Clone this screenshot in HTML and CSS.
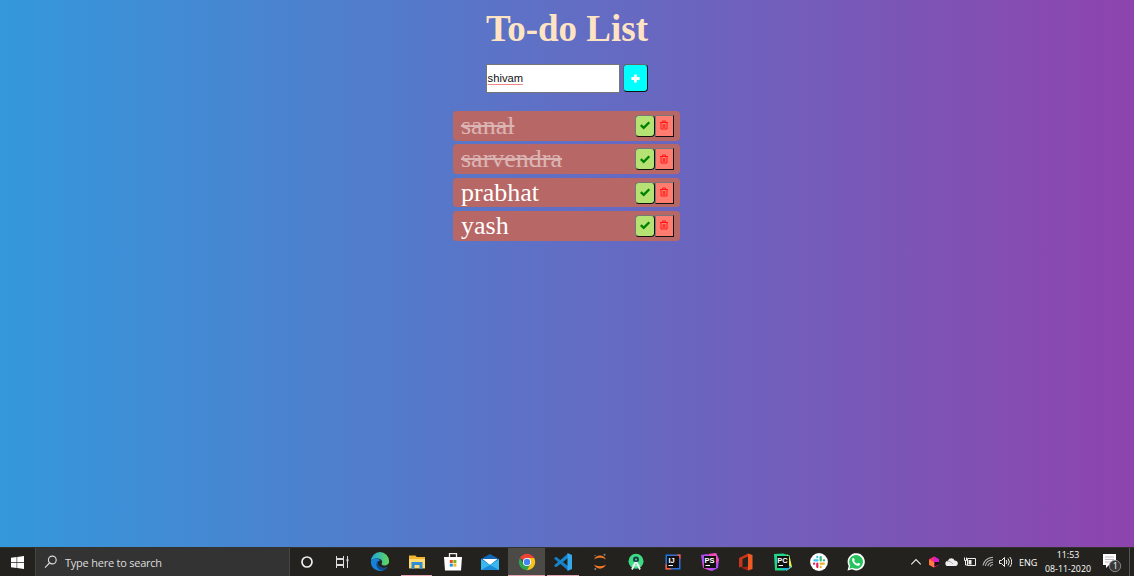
FILE: index.html
```html
<!DOCTYPE html>
<html lang="en">
<head>
<meta charset="utf-8">
<title>To-do List</title>
<link rel="stylesheet" href="styles.css">
</head>
<body>
<svg class="defs" width="0" height="0">
  <defs>
    <symbol id="check" viewBox="0 0 12 12"><path d="M1.8 6.2 4.7 8.9 10.3 3.3" fill="none" stroke="#008000" stroke-width="2.3"/></symbol>
    <symbol id="trash" viewBox="0 0 12 12"><path d="M2 3.500h8M4.500 3.200V2h3v1.200M3 3.800v6.200h6V3.800M5.200 5v4M6.800 5v4" fill="none" stroke="#ff1818" stroke-width="1"/></symbol>
  </defs>
</svg>
<main class="page">
  <h1 class="title">To-do List</h1>
  <form class="entry">
    <div class="field"><span class="typed">shivam</span></div>
    <button class="add" type="button" aria-label="Add"><svg width="9" height="9" viewBox="0 0 9 9"><path d="M4.5.4v8.2M.4 4.5h8.2" stroke="#fff" stroke-width="2.8"/></svg></button>
  </form>
  <ul class="list">
    <li class="item"><span class="name done">sanal</span><button class="btn ok"><svg><use href="#check"/></svg></button><button class="btn del"><svg><use href="#trash"/></svg></button></li>
    <li class="item"><span class="name done">sarvendra</span><button class="btn ok"><svg><use href="#check"/></svg></button><button class="btn del"><svg><use href="#trash"/></svg></button></li>
    <li class="item"><span class="name">prabhat</span><button class="btn ok"><svg><use href="#check"/></svg></button><button class="btn del"><svg><use href="#trash"/></svg></button></li>
    <li class="item"><span class="name">yash</span><button class="btn ok"><svg><use href="#check"/></svg></button><button class="btn del"><svg><use href="#trash"/></svg></button></li>
  </ul>
</main>
<footer class="taskbar">
  <div class="start"><svg width="13" height="13" viewBox="0 0 13 13"><path fill="#fff" d="M0 1.8 5.6 1v5.1H0zM6.2.9 13 0v6.1H6.2zM0 6.8h5.6V12L0 11.2zM6.2 6.8H13V13l-6.8-.9z"/></svg></div>
  <div class="search">
    <svg width="14" height="14" viewBox="0 0 14 14"><g fill="none" stroke="#ddd" stroke-width="1.1"><circle cx="8.3" cy="5" r="3.9"/><path d="M5.5 8 1 12.6"/></g></svg>
    <span>Type here to search</span>
  </div>
  <div class="apps">
    <div class="app"><svg viewBox="0 0 20 20"><circle cx="10" cy="10" r="5" fill="none" stroke="#eee" stroke-width="1.7"/></svg></div>
    <div class="app task"><svg viewBox="0 0 20 20"><g fill="none" stroke="#ddd" stroke-width="1"><path d="M4.500 4v2.500h7V4M4.500 16v-2.500h7V16M4.500 7.500h7v5h-7zM4.500 6v8M11.500 6v8M15.500 4v12"/><path d="M14.500 8.200h2" stroke-width="2"/></g></svg></div>
    <div class="app"><svg viewBox="0 0 20 20">
      <defs><linearGradient id="edge" x1="0" x2="1"><stop offset="0" stop-color="#1ca5e6"/><stop offset="1" stop-color="#62d957"/></linearGradient></defs>
      <path d="M1 9A9 9 0 0 1 19 9c.4 3-2.2 4.700-5 4.500-2-.1-2.700-1-2.400-1.700C13.600 8.200 10 6 6.300 6.500 3.800 6.800 2 7.700 1 9z" fill="url(#edge)"/>
      <path d="M1 9c1-3 7.500-3.600 9.600-.5C8 8 7 11 8 13c1.600 3.200 6 3.800 9.300 2A9 9 0 0 1 1 9z" fill="#1583d8"/>
      <path d="M7.500 9c-3 4 .2 9.200 5 9.600 2-.4 4-2 5-3.600-3.400 1.600-7.600 1-9.200-2C7.600 11.500 7.600 10 8.500 9z" fill="#104a91"/></svg></div>
    <div class="app open"><svg viewBox="0 0 20 20"><path d="M2 3.500h6.500l1.300 1.500H18v11.500H2z" fill="#f3b72f"/><path d="M2 7h16v9H2z" fill="#ffdb72"/><path d="M4.500 10h11v7h-3v-4h-5v4h-3z" fill="#2e8ed5"/></svg></div>
    <div class="app"><svg viewBox="0 0 20 20"><path d="M6.500 5V1.600h7V5" fill="none" stroke="#eee" stroke-width="1.300"/><path d="M1 5h18l-1 13.500H2z" fill="#fff"/><path fill="#f04b23" d="M6.800 8h3v3h-3z"/><path fill="#75b817" d="M10.400 8h3v3h-3z"/><path fill="#159be5" d="M6.800 11.600h3v3h-3z"/><path fill="#f7b719" d="M10.400 11.600h3v3h-3z"/></svg></div>
    <div class="app"><svg viewBox="0 0 20 20"><path d="M1 7 10 2l9 5v11H1z" fill="#1267b4"/><path d="M2.500 7h15L10 13z" fill="#fff"/><path d="m1 7 9 6 9-6v11H1z" fill="#37b8ee"/><path d="m1 18 9-5 9 5z" fill="#198ad7"/></svg></div>
    <div class="app open active"><svg viewBox="0 0 20 20"><path d="M10 10 2.900 5.900A8.200 8.200 0 0 1 17.100 5.900z" fill="#e94435"/><path d="M10 10V5.900h7.100A8.200 8.200 0 0 1 10 18.200z" fill="#fbc116"/><path d="M10 10v8.200A8.200 8.200 0 0 1 2.900 5.900l3.600 6.100 7 0-3.500 6.200z" fill="#31a350"/><circle cx="10" cy="10" r="4.100" fill="#fff"/><circle cx="10" cy="10" r="3.200" fill="#4285f4"/></svg></div>
    <div class="app open"><svg viewBox="0 0 20 20"><path d="m1 6.500 2-1.700L15 14v4.500z" fill="#167fc7"/><path d="m1 13.500 2 1.700L15 6V1.500z" fill="#1686cd"/><path d="m14.500 1 4.500 2v14l-4.500 2z" fill="#32a9ed"/></svg></div>
    <div class="app"><svg viewBox="0 0 20 20"><path d="M4 7.500c2-5.500 10-5.500 12 0-3-2.300-9-2.300-12 0zM4 12.500c2 5.500 10 5.500 12 0-3 2.300-9 2.300-12 0z" fill="#f37726"/><g fill="#888"><circle cx="14.500" cy="2.800" r="1"/><circle cx="5" cy="3.600" r=".7"/><circle cx="5.300" cy="17" r="1"/></g></svg></div>
    <div class="app"><svg viewBox="0 0 20 20"><circle cx="10" cy="9.300" r="7.500" fill="#3ddc84"/><circle cx="10" cy="7.500" r="3" fill="#173e48"/><path d="m9.500 10-3.500 7.500M10.500 10l3.500 7.500" stroke="#e9f5f2" stroke-width="1.800"/><path d="M6.500 13q3.500 2 7 0" stroke="#e9f5f2" fill="none"/><circle cx="10" cy="7.500" r="1" fill="#3ddc84"/></svg></div>
    <div class="app"><svg viewBox="0 0 20 20"><defs><linearGradient id="idea" x2="1" y2="1"><stop stop-color="#087cfa"/><stop offset=".55" stop-color="#6c62a8"/><stop offset="1" stop-color="#087cfa"/></linearGradient></defs><path d="M2.500 2.500h15v15h-15z" fill="url(#idea)"/><path d="m2.500 12 6 5.500h-6zM14 2.500h3.500V7z" fill="#fe5c35"/><path d="M4 4h12v12H4z" fill="#111"/><text x="5.500" y="10.800" class="badge">IJ</text><path d="M5.500 13.500h4.500" stroke="#fff"/></svg></div>
    <div class="app"><svg viewBox="0 0 20 20"><path d="m1 3 6-1 2 1 7-2 3 6-1 9-6 3-9-3z" fill="#b04cf3"/><path d="m8 2 8-1 3 8-3 2zM2 10l2 6 7 3z" fill="#f24bba"/><path d="M4 4h12v12H4z" fill="#111"/><text x="4.500" y="10.800" class="badge">PS</text><path d="M5.500 13.500h4.500" stroke="#fff"/></svg></div>
    <div class="app"><svg viewBox="0 0 20 20"><path d="m3 6 9-4.500v3L6.500 7v7.500L3 15.500z" fill="#c83518"/><path d="m12 1.500 4.500 1.500v14L12 18.500z" fill="#f25a24"/><path d="m4.500 15.500 7.500-1v4z" fill="#a81f16"/></svg></div>
    <div class="app"><svg viewBox="0 0 20 20"><path d="m1 2 9-.5 7 2-1 11-4 4-10 0z" fill="#21d789"/><path d="m14 2 3 4 2 9-6 4 2-8z" fill="#e8ef4b"/><path d="m15 13 3.500 2-5 3.500-5-2z" fill="#1cb5ea"/><path d="M4 4h12v12H4z" fill="#111"/><text x="4.300" y="10.800" class="badge">PC</text><path d="M5.500 13.500h4.500" stroke="#fff"/></svg></div>
    <div class="app"><svg viewBox="0 0 20 20"><circle cx="10" cy="10" r="8.900" fill="#fff"/><g fill="none" stroke-linecap="round" stroke-width="2.200"><path d="M5.400 8.300h3.200M8.300 4.800v.4" stroke="#36c5f0"/><path d="M11.700 5v3.500M14.800 8.300h.3" stroke="#2eb67d"/><path d="M11.600 11.700h3.300M11.700 14.900v.3" stroke="#ecb22e"/><path d="M8.300 11.700V15M5 11.700h.2" stroke="#e01e5a"/></g></svg></div>
    <div class="app"><svg viewBox="0 0 20 20"><path d="m1.500 18.500 1.200-4.500A8.600 8.600 0 1 1 6 17.300z" fill="#fff"/><path d="m3.300 16.800 1-3.100a6.900 6.900 0 1 1 2.200 2.100z" fill="#25c35b"/><path d="M6.300 6.600c.7-1 1.600-.7 1.900 0l.6 1.400-.7 1c.8 1.300 1.800 2.200 3.100 2.700l1-1 2 1c-.2 2-2 2.400-3.500 1.900-2.500-.8-5.200-3.500-4.400-7z" fill="#fff"/></svg></div>
  </div>
  <div class="tray">
    <svg viewBox="0 0 14 14"><path d="m2.300 9.300 4.700-4.700 4.700 4.700" fill="none" stroke="#eee" stroke-width="1.100"/></svg>
    <svg viewBox="0 0 14 14"><path d="m2 4.200 5-2.700 5 2.700v5.600l-5 2.700-5-2.700z" fill="#f52e73"/><path d="m2 4.200 5 2.800v5.500L2 9.800z" fill="#ff7a3c"/><path d="m7 1.500 5 2.700V7H7z" fill="#d120cc"/><path d="M7.500 7H12v2.500l-4.500 2z" fill="#181218"/></svg>
    <svg viewBox="0 0 14 14"><path d="M3 11a2.600 2.600 0 0 1 0-5.200c1-3.400 5.500-3.200 6.500-.2 3.800-.2 4.500 4.800 1.500 5.400z" fill="#eee"/><path d="M2 6.500C4 5.500 6 7 8 9" stroke="#aaa" fill="none"/></svg>
    <svg viewBox="0 0 14 14"><g fill="none" stroke="#eee"><path d="M4.500 3.500h8v7h-8zM1.500 2.500v3h2v-3M2.500 5.500v4.500h2"/></g><path d="M5.500 5h3v4.500h-3z" fill="#eee"/></svg>
    <svg viewBox="0 0 14 14"><g fill="none" stroke="#bbb" stroke-width="1.050"><path d="M2 10.500C3 6 6.500 2.500 12 2.200M4.300 11C5 7.500 8 5 12 4.800M6.800 11c.5-2 2.300-3.600 5.200-3.800M9.200 11.500c.3-1 1.200-1.800 2.800-2"/></g></svg>
    <svg viewBox="0 0 14 14"><g fill="none" stroke="#eee"><path d="M1.500 5.500h2l3-3v9l-3-3h-2zM8.200 5q1.400 2 0 4M10 3.500q2.800 3.500 0 7M11.800 2q4 5 0 10"/></g></svg>
  </div>
  <div class="lang">ENG</div>
  <div class="clock"><span>11:53</span><span>08-11-2020</span></div>
  <div class="notes"><svg width="20" height="20" viewBox="0 0 20 20"><path d="M1 1h13v11H7l-3 3v-3H1z" fill="#fff"/><path d="M3 4h9M3 6.500h9M3 9h6" stroke="#aaa" stroke-width=".8"/><circle cx="13" cy="13" r="5.700" fill="#383838" stroke="#999" stroke-width=".8"/><text x="10.700" y="16.300" class="count">1</text></svg></div>
</footer>
</body>
</html>
```
FILE: styles.css
```css
* { box-sizing: border-box; }
body {
  margin: 0;
  height: 576px;
  overflow: hidden;
  display: flex;
  flex-direction: column;
  background: linear-gradient(to right, #3498db, #8e44ad);
  font-family: "Liberation Serif", "Times New Roman", serif;
}
.defs { display: block; height: 0; flex: none; }
.page { flex: 1; display: flex; flex-direction: column; align-items: center; }
.title { margin: 8px 0 0; font-size: 37px; line-height: 42px; height: 42px; color: bisque; white-space: nowrap; }
.entry { display: flex; gap: 3px; margin: 14px 0 0; }
.field {
  width: 134px; height: 29px; padding: 0 0 1px .6px;
  display: flex; align-items: center;
  background: #fff; border: 1px solid #767676;
  font: 11.2px "Liberation Sans", Arial, sans-serif; color: #111;
}
.typed { text-decoration: underline 1px #e88; text-underline-offset: 2px; line-height: 12px; }
.add {
  width: 25px; height: 28px; padding: 0;
  display: grid; place-items: center;
  background: cyan;
  border: 1.5px solid; border-color: #666 #111 #111 #666; border-radius: 4px;
}
.list { list-style: none; margin: 18px 1px 0 0; padding: 0; display: grid; gap: 3.4px; }
.item {
  width: 227px; height: 29.9px; padding: 0 6px 0 8px;
  display: flex; align-items: center;
  background: #b76866; border-radius: 4px;
}
.name { flex: 1; font-size: 26px; line-height: 30px; color: #fff; }
.done { text-decoration: line-through; opacity: .5; }
.btn {
  width: 19px; height: 22px; padding: 0;
  display: grid; place-items: center;
  border: 1.5px solid; border-color: #777 #111 #111 #777;
}
.btn svg { width: 12px; height: 12px; margin-top: -1px; }
.ok { width: 20px; background: #b5e272; border-radius: 4px; }
.del { background: #ff7c70; }
.del svg { margin-left: -1px; }
.taskbar {
  height: 29px; flex: none;
  display: flex; align-items: stretch;
  background: #23221e; border-top: 1px solid #34322e;
  color: #fff; font-family: "Open Sans", "Noto Sans", sans-serif;
}
.start { width: 35px; display: grid; place-items: center; }
.search {
  width: 255px; padding-left: 8px;
  display: flex; align-items: center; gap: 7px;
  background: #333; border: 1px solid #454545; border-width: 0 1px;
  font-size: 11px; color: #ddd; letter-spacing: -.23px;
}
.apps { display: flex; flex: none; width: 583px; }
.app { flex: none; width: 36.6px; display: grid; place-items: center; border-bottom: 1px solid transparent; }
.app:first-child { width: 35.4px; }
.app:first-child svg { margin-left: -2px; }
.app svg { width: 20px; height: 20px; }
.task svg { margin-left: -3px; }
.open {
  border-style: solid; border-width: 0 0 1px;
  border-image: linear-gradient(to right, transparent 3px, #e3a5b0 3px, #e3a5b0 33px, transparent 33px) 1;
}
.active { background: #4b4a47; border-image: none; border-color: #e3a5b0; }
.badge { font: bold 7.5px "Liberation Sans", Arial, sans-serif; fill: #fff; }
.tray { margin-left: 36px; width: 104px; flex: none; display: flex; align-items: center; gap: 3.9px; }
.tray svg { width: 14px; height: 14px; flex: none; }
.lang { flex: none; width: 25px; margin-left: 6px; font-size: 9px; line-height: 29px; }
.clock {
  flex: none; width: 48px;
  display: grid; justify-items: center; align-content: start;
  padding-top: 1px; font-size: 8.8px; line-height: 13.5px; white-space: nowrap;
}
.notes { flex: none; display: flex; align-items: center; margin-left: 10px; width: 28px; padding-top: 2px; border-right: 1px solid #555; }
.count { font: 9px "Open Sans", sans-serif; fill: #fff; }
```
